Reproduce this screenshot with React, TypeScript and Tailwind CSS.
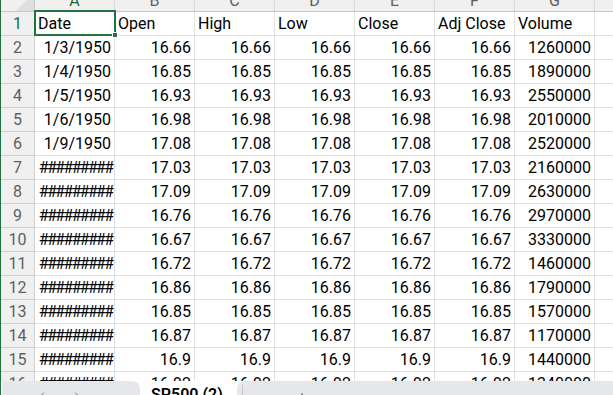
import { ChevronLeft, ChevronRight, Plus } from "lucide-react";

const COLS = ["A", "B", "C", "D", "E", "F", "G"];
const HEADERS = ["Date", "Open", "High", "Low", "Close", "Adj Close", "Volume"];

// date, price (open = high = low = close = adj), volume
const ROWS: [string, string, string][] = [
  ["1/3/1950", "16.66", "1260000"],
  ["1/4/1950", "16.85", "1890000"],
  ["1/5/1950", "16.93", "2550000"],
  ["1/6/1950", "16.98", "2010000"],
  ["1/9/1950", "17.08", "2520000"],
  ["#########", "17.03", "2160000"],
  ["#########", "17.09", "2630000"],
  ["#########", "16.76", "2970000"],
  ["#########", "16.67", "3330000"],
  ["#########", "16.72", "1460000"],
  ["#########", "16.86", "1790000"],
  ["#########", "16.85", "1570000"],
  ["#########", "16.87", "1170000"],
  ["#########", "16.9", "1440000"],
  ["#########", "16.92", "1340000"],
];

function Cell({ children, align = "left" }: { children?: React.ReactNode; align?: "left" | "right" | "center" }) {
  const justify = align === "right" ? "justify-end" : align === "center" ? "justify-center" : "justify-start";
  return (
    <div className={`w-[80px] shrink-0 h-full border-r border-b border-[#e1e1e1] flex items-end ${justify} px-[3px] pb-[3px] overflow-hidden whitespace-nowrap`}>
      <span className="leading-[16px]">{children}</span>
    </div>
  );
}

function RowHeader({ n, active }: { n: number; active?: boolean }) {
  return (
    <div className="w-[34px] shrink-0 h-full bg-[#f0f0f0] border-r border-b border-[#d2d2d2] flex items-end justify-center pb-[3px]">
      <span className={`leading-[16px] ${active ? "text-[#1e6b41]" : "text-[#5f5f5f]"}`}>{n}</span>
    </div>
  );
}

export default function App() {
  return (
    <div className="w-[613px] h-[395px] overflow-hidden bg-white border-l border-[#217346] flex flex-col font-['Roboto',sans-serif] text-[16px] text-black">
      {/* Grid */}
      <div className="relative h-[381px] shrink-0 overflow-hidden">
        {/* Column letters */}
        <div className="flex h-[12px] bg-[#f0f0f0] border-b border-[#c8c8c8]">
          <div className="relative w-[34px] shrink-0 border-r border-[#c8c8c8] overflow-hidden">
            <svg className="absolute left-0 top-0" width="33" height="11">
              <polygon points="15,11 33,11 33,-7" fill="#dedede" />
            </svg>
          </div>
          {COLS.map((c) => (
            <div key={c} className="w-[80px] shrink-0 border-r border-[#d9d9d9] flex justify-center overflow-hidden">
              <span className={`-mt-[7px] leading-[16px] ${c === "A" ? "text-[#1e6b41]" : "text-[#5f5f5f]"}`}>{c}</span>
            </div>
          ))}
          <div className="flex-1" />
        </div>

        {/* Row 1: headers */}
        <div className="flex h-[24px]">
          <RowHeader n={1} active />
          {HEADERS.map((h) => (
            <Cell key={h}>{h}</Cell>
          ))}
          <div className="flex-1 border-b border-[#e1e1e1]" />
        </div>

        {/* Data rows */}
        {ROWS.map(([date, price, vol], i) => (
          <div key={i} className="flex h-[24px]">
            <RowHeader n={i + 2} />
            <Cell align={date.startsWith("#") ? "center" : "right"}>
              {date.startsWith("#") ? <span className="tracking-[-1.7px] pl-[2px]">{date}</span> : date}
            </Cell>
            <Cell align="right">{price}</Cell>
            <Cell align="right">{price}</Cell>
            <Cell align="right">{price}</Cell>
            <Cell align="right">{price}</Cell>
            <Cell align="right">{price}</Cell>
            <Cell align="right">{vol}</Cell>
            <div className="flex-1 border-b border-[#e1e1e1]" />
          </div>
        ))}

        {/* Active cell selection */}
        <div className="absolute left-[33px] top-[10px] w-[82px] h-[26px] border-2 border-[#217346]" />
        <div className="absolute left-[111px] top-[32px] w-[6px] h-[6px] bg-[#217346] border border-white" />
      </div>

      {/* Sheet tabs */}
      <div className="flex h-[14px] shrink-0 bg-white">
        <div className="relative ml-[1px] w-[138px] bg-[#e6e7eb] rounded-tr-[8px]">
          <ChevronLeft className="absolute left-[34px] top-[9px] text-[#6b6b6b]" size={12} strokeWidth={2} />
          <ChevronRight className="absolute left-[69px] top-[9px] text-[#6b6b6b]" size={12} strokeWidth={2} />
        </div>
        <div className="w-[97px] pl-[11px] pt-[6px]">
          <span className="block leading-[16px] font-semibold whitespace-nowrap">SP500 (2)</span>
        </div>
        <div className="relative flex-1 bg-[#e6e7eb] rounded-tl-[8px]">
          <div className="absolute left-[5px] top-[4px] w-px h-[10px] bg-[#c4c4c4]" />
          <Plus className="absolute left-[59px] top-[10px] text-[#444]" size={12} strokeWidth={2} />
        </div>
      </div>
    </div>
  );
}
